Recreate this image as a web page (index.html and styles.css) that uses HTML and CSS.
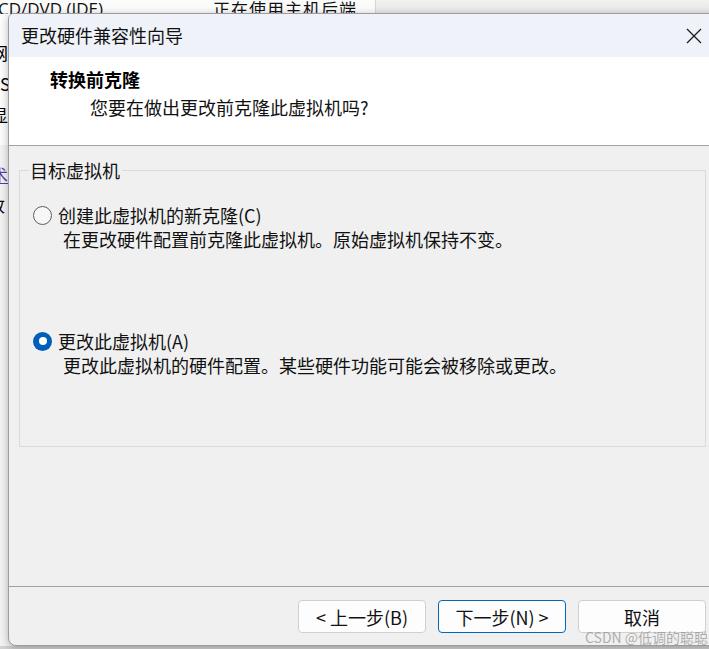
FILE: index.html
```html
<!DOCTYPE html>
<html lang="zh-CN">
<head>
<meta charset="utf-8">
<title>更改硬件兼容性向导</title>
<link rel="stylesheet" href="styles.css">
</head>
<body>
<div class="desk">
  <div class="bg-top">
    <div class="bg-top-left">
      <span class="bg-t1">CD/DVD (IDE)</span>
      <span class="bg-t2">正在使用主机后端</span>
    </div>
    <div class="bg-top-right"></div>
  </div>
  <div class="bg-left">
    <div class="bg-l-upper">
      <div class="bg-ch">网</div>
      <div class="bg-ch">US</div>
      <div class="bg-ch">显</div>
    </div>
    <div class="bg-l-lower">
      <div class="bg-ch link">术</div>
      <div class="bg-ch">改</div>
    </div>
  </div>
</div>

<div class="dialog">
  <div class="titlebar">
    <span class="title">更改硬件兼容性向导</span>
    <span class="close">
      <svg width="16" height="16" viewBox="0 0 16 16"><path d="M1 1 L15 15 M15 1 L1 15" stroke="#1b1b1b" stroke-width="1.3" fill="none"/></svg>
    </span>
  </div>
  <div class="header">
    <div class="h-title">转换前克隆</div>
    <div class="h-sub">您要在做出更改前克隆此虚拟机吗?</div>
  </div>
  <div class="body">
    <fieldset class="group">
      <legend>目标虚拟机</legend>
      <div class="option first">
        <div class="opt-row"><span class="radio"></span><span class="opt-label">创建此虚拟机的新克隆(C)</span></div>
        <div class="opt-desc">在更改硬件配置前克隆此虚拟机。原始虚拟机保持不变。</div>
      </div>
      <div class="option second">
        <div class="opt-row"><span class="radio checked"></span><span class="opt-label">更改此虚拟机(A)</span></div>
        <div class="opt-desc">更改此虚拟机的硬件配置。某些硬件功能可能会被移除或更改。</div>
      </div>
    </fieldset>
  </div>
  <div class="footer">
    <button class="btn">&lt; 上一步(B)</button>
    <button class="btn default">下一步(N) &gt;</button>
    <button class="btn">取消</button>
  </div>
  <div class="watermark">CSDN @低调的聪聪</div>
</div>
</body>
</html>
```

FILE: styles.css
```css
* { box-sizing: border-box; }
html, body {
  margin: 0;
  padding: 0;
}
body {
  width: 709px;
  height: 649px;
  overflow: hidden;
  position: relative;
  background: #d2d2d2;
  font-family: "Noto Sans CJK SC", "Microsoft YaHei", sans-serif;
  color: #000;
}

/* background window */
.desk {
  position: absolute;
  left: 0;
  top: 0;
  width: 709px;
  height: 646px;
  background: #eeeeee;
}
.bg-top {
  display: flex;
  height: 14px;
  overflow: hidden;
}
.bg-top-left {
  width: 376px;
  background: #fbfbfb;
  border-right: 1px solid #d6d6d6;
  display: flex;
  font-size: 17px;
  line-height: 20px;
  color: #111;
  margin-top: -1px;
  height: 15px;
}
.bg-t1 {
  width: 215px;
  margin-left: -2px;
  font-family: "Open Sans", "Noto Sans CJK SC", sans-serif;
}
.bg-t2 {
  letter-spacing: 1px;
}
.bg-top-right {
  flex: 1;
  background: linear-gradient(#f2f2f2, #e6e6e6);
}
.bg-left {
  position: absolute;
  left: 0;
  top: 14px;
  width: 12px;
  height: 632px;
  overflow: hidden;
}
.bg-l-upper {
  height: 131px;
  background: #fdfdfd;
  padding-top: 23px;
}
.bg-l-lower {
  background: #f3f3f3;
  padding-top: 15px;
  height: 501px;
}
.bg-ch {
  font-size: 17px;
  line-height: 31px;
  height: 31px;
  margin-left: -9px;
  white-space: nowrap;
}
.bg-ch:nth-child(2) { margin-left: -12px; }
.bg-l-lower .bg-ch { line-height: 30px; height: 30px; }
.bg-ch.link {
  color: #5a3aa6;
  text-decoration: underline;
}

/* dialog window */
.dialog {
  position: absolute;
  left: 8px;
  top: 13px;
  width: 712px;
  border: 1px solid #9c9c9c;
  border-radius: 6px 0 0 8px;
  background: #f0f0f0;
  box-shadow: 0 2px 8px rgba(0, 0, 0, 0.28);
  overflow: hidden;
}
.titlebar {
  height: 43px;
  background: #eff3f9;
  display: flex;
  align-items: center;
  justify-content: space-between;
  padding-left: 12px;
  padding-right: 2px;
}
.title {
  font-size: 18px;
  line-height: 43px;
  color: #111;
}
.close {
  width: 46px;
  height: 43px;
  display: flex;
  align-items: center;
  justify-content: center;
  padding-top: 1px;
}
.header {
  height: 89px;
  background: #ffffff;
  border-bottom: 1px solid #a2a2a2;
  padding-top: 10px;
}
.h-title {
  font-size: 18px;
  font-weight: 700;
  line-height: 24px;
  padding-left: 41px;
}
.h-sub {
  font-size: 18px;
  line-height: 24px;
  margin-top: 4px;
  padding-left: 81px;
  color: #111;
}
.body {
  height: 440px;
  padding-top: 14px;
  padding-left: 10px;
  padding-right: 13px;
}
.group {
  margin: 0;
  padding: 0 0 69px 0;
  border: 1px solid #dadada;
  min-width: 0;
}
.group legend {
  font-size: 18px;
  line-height: 20px;
  padding: 0 2px 0 1px;
  margin-left: 9px;
  color: #111;
}
.option { padding-left: 13px; }
.option.first { margin-top: 23px; }
.option.second { margin-top: 78px; }
.opt-row {
  display: flex;
  align-items: center;
  height: 24px;
}
.radio {
  width: 19px;
  height: 19px;
  border-radius: 50%;
  border: 1px solid #5d5d5d;
  background: #f7f7f7;
  flex: none;
  display: flex;
  align-items: center;
  justify-content: center;
}
.radio.checked {
  border: none;
  background: #005fb8;
}
.radio.checked::after {
  content: "";
  width: 8px;
  height: 8px;
  border-radius: 50%;
  background: #ffffff;
}
.opt-label {
  font-size: 18px;
  line-height: 24px;
  margin-left: 6px;
  color: #111;
}
.opt-desc {
  font-size: 18px;
  line-height: 24px;
  padding-left: 30px;
  color: #111;
}

.footer {
  border-top: 1px solid #a2a2a2;
  height: 59px;
  padding-top: 13px;
  padding-right: 13px;
  display: flex;
  justify-content: flex-end;
  gap: 12px;
}
.btn {
  width: 128px;
  height: 33px;
  border: 1px solid #d0d0d0;
  border-radius: 4px;
  background: #fdfdfd;
  font-family: "Noto Sans CJK SC", "Microsoft YaHei", sans-serif;
  font-size: 18px;
  line-height: 30px;
  padding: 0;
  color: #111;
}
.btn.default {
  border-color: #0067c0;
}
.watermark {
  position: absolute;
  left: 576px;
  top: 614px;
  font-size: 14px;
  line-height: 18px;
  color: rgba(150, 150, 150, 0.75);
  white-space: nowrap;
}
```
